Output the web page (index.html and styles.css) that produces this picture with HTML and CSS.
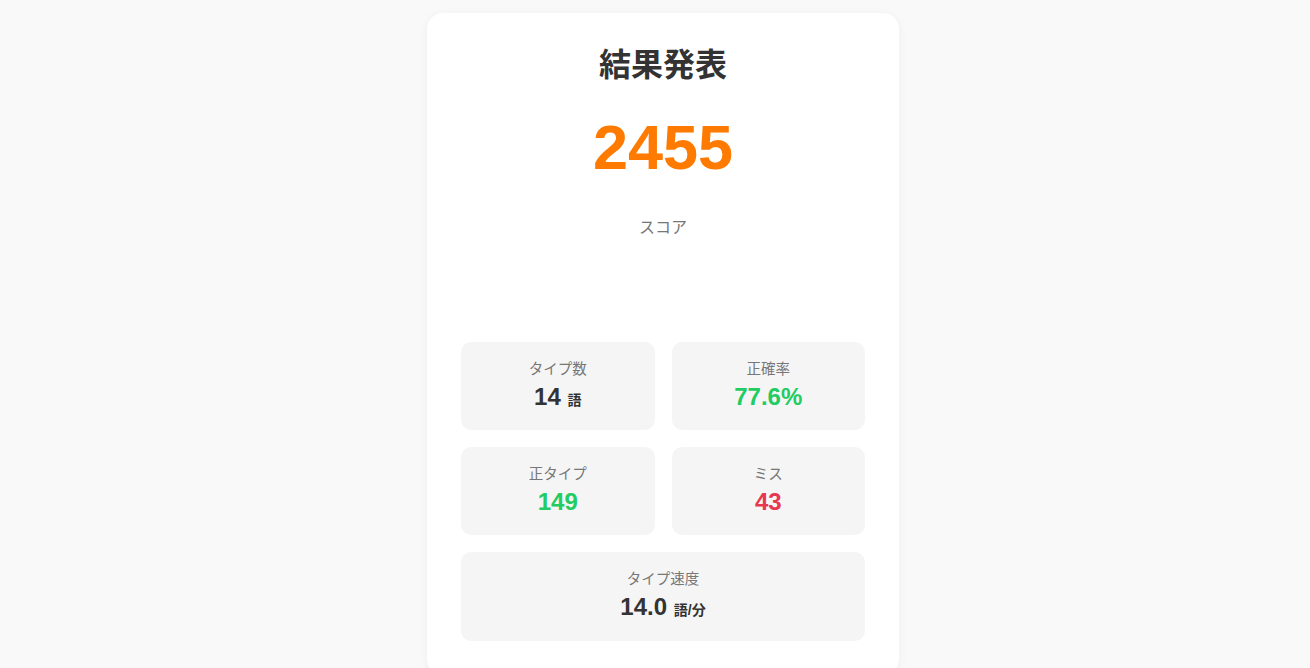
FILE: index.html
```html
<!DOCTYPE html>
<html lang="ja">
<head>
    <meta charset="UTF-8">
    <meta name="viewport" content="width=device-width, initial-scale=1.0">
    <title>結果発表</title>
    <link rel="stylesheet" href="styles.css">
</head>
<body>
    <div class="result-card">
        <h1>結果発表</h1>
        <div class="score">2455</div>
        <div class="score-label">スコア</div>
        <div class="comment"></div>

        <div class="stats">
            <div class="stat-box">
                <div class="stat-label">タイプ数</div>
                <div class="stat-value">14 <span class="unit">語</span></div>
            </div>
            <div class="stat-box">
                <div class="stat-label">正確率</div>
                <div class="stat-value good">77.6%</div>
            </div>
            <div class="stat-box">
                <div class="stat-label">正タイプ</div>
                <div class="stat-value good">149</div>
            </div>
            <div class="stat-box">
                <div class="stat-label">ミス</div>
                <div class="stat-value bad">43</div>
            </div>
            <div class="stat-box wide">
                <div class="stat-label">タイプ速度</div>
                <div class="stat-value">14.0 <span class="unit">語/分</span></div>
            </div>
        </div>
    </div>
</body>
</html>
```

FILE: styles.css
```css
* {
    margin: 0;
    padding: 0;
    box-sizing: border-box;
    font-family: 'Liberation Sans', 'Noto Sans CJK JP', sans-serif;
}

body {
    background-color: #f9f9f9;
    padding: 13px 0 0 16px;
    color: #333;
}

.result-card {
    width: 472px;
    margin: 0 auto;
    background-color: #fff;
    padding: 33px 34px 34px;
    border-radius: 16px;
    box-shadow: 0 2px 10px rgba(0, 0, 0, 0.05);
    text-align: center;
}

h1 {
    font-size: 32px;
    line-height: 1.2;
    font-weight: bold;
    color: #333;
}

.score {
    margin-top: 32px;
    font-size: 63px;
    line-height: 1;
    font-weight: bold;
    color: #ff7a00;
}

.score-label {
    margin-top: 37px;
    font-size: 16px;
    line-height: 1.5;
    color: #777;
}

.comment {
    height: 102px;
}

.stats {
    display: grid;
    grid-template-columns: 1fr 1fr;
    gap: 17px;
}

.stat-box {
    background-color: #f5f5f5;
    border-radius: 10px;
    padding: 17px 12px 18.5px;
}

.stat-box.wide {
    grid-column: span 2;
}

.stat-label {
    font-size: 14.5px;
    line-height: 1.5;
    color: #777;
    margin-bottom: 2px;
}

.stat-value {
    font-size: 24px;
    line-height: 1.2;
    font-weight: bold;
    color: #333;
}

.stat-value .unit {
    font-size: 14px;
}

.good {
    color: #22cc62;
}

.bad {
    color: #e8384f;
}
```
